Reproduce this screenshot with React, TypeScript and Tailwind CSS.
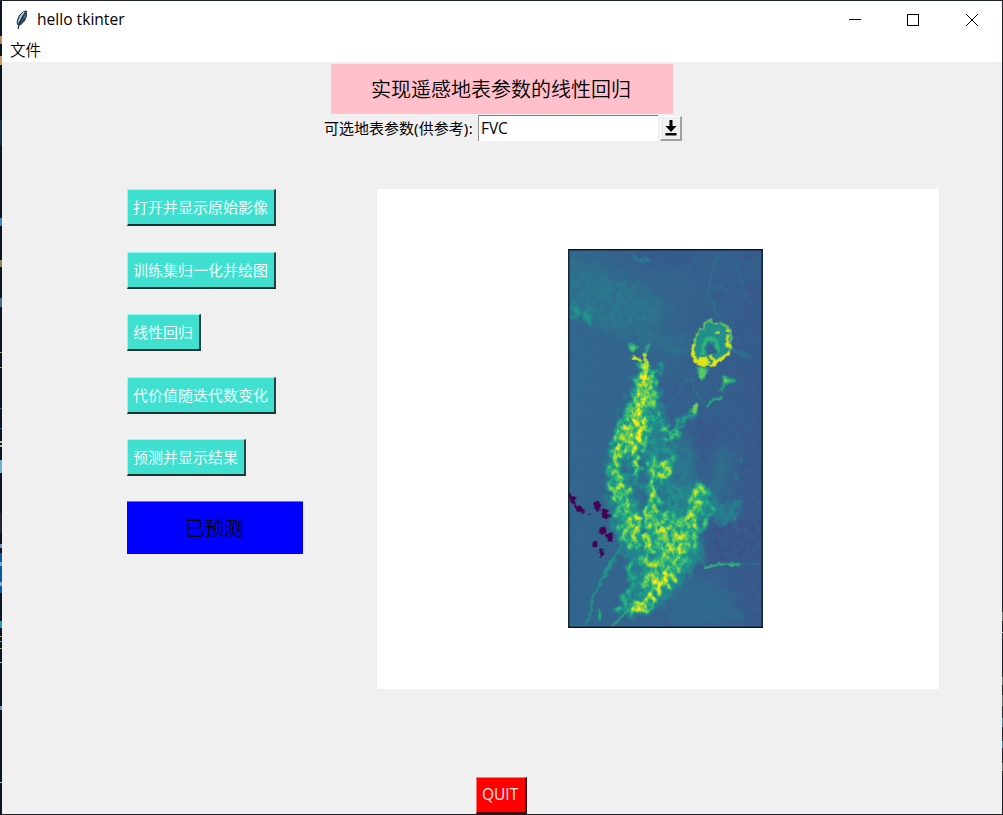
import type { ReactNode } from 'react';

const leftFlecks = [
  { top: 36, height: 8, color: '#b08b55' },
  { top: 56, height: 9, color: '#c39b63' },
  { top: 120, height: 25, color: '#16324f' },
  { top: 218, height: 8, color: '#3c86b8' },
  { top: 260, height: 7, color: '#92845c' },
  { top: 298, height: 9, color: '#416f9a' },
  { top: 352, height: 1, color: '#8aa84c' },
  { top: 367, height: 1, color: '#8aa84c' },
  { top: 408, height: 1, color: '#2b6699' },
  { top: 428, height: 1, color: '#2b6699' },
  { top: 441, height: 2, color: '#b8b8b8' },
  { top: 445, height: 2, color: '#b8b8b8' },
  { top: 460, height: 13, color: '#69afd4' },
  { top: 513, height: 20, color: '#25252d' },
  { top: 544, height: 4, color: '#6b94c4' },
  { top: 553, height: 40, color: '#075aa5' },
  { top: 562, height: 4, color: '#7aaac5' },
  { top: 582, height: 4, color: '#7aaac5' },
  { top: 621, height: 7, color: '#1b9db4' },
  { top: 636, height: 1, color: '#8aa84c' },
  { top: 641, height: 1, color: '#8aa84c' },
  { top: 648, height: 1, color: '#8aa84c' },
  { top: 662, height: 1, color: '#9fc6d6' },
  { top: 706, height: 4, color: '#6b94c4' },
  { top: 782, height: 1, color: '#9fc6d6' },
];

const rightFlecks = [
  { top: 612, height: 9, color: '#6d7074' },
  { top: 632, height: 1, color: '#a8abad' },
  { top: 677, height: 8, color: '#6d6c66' },
  { top: 695, height: 11, color: '#66695b' },
  { top: 718, height: 9, color: '#517b93' },
  { top: 741, height: 7, color: '#4f789a' },
  { top: 763, height: 8, color: '#6b6b60' },
];

function TkButton({ children, className }: { children: ReactNode; className: string }) {
  return (
    <button
      className={`flex h-[37px] shrink-0 items-center whitespace-nowrap border-t border-l border-r-2 border-b-2 border-t-[#8ffaf0] border-l-[#8ffaf0] border-r-[#1c4743] border-b-[#17332f] bg-[#40e0d0] pb-[2px] pl-[5px] text-[15px] leading-none font-normal text-[#eafefb] ${className}`}
    >
      {children}
    </button>
  );
}

function Feather() {
  return (
    <svg className="h-[20px] w-[14px]" viewBox="0 0 14 20">
      <path d="M11.2 .8C7 1.8 4 5 2.6 9.6c-.7 2.2-.4 4.2.2 5.2l1.4.2c2.4-1 4.8-2.9 6-5.4C11.700 6.400 12 3 11.200.8Z" fill="#3f70a3" stroke="#26303b" strokeWidth="1" />
      <path d="M9.500 2.300C6 4.800 4.500 8 3.800 12.500" fill="none" stroke="#b9d8ef" strokeWidth="1.600" />
      <path d="M10.300 2.500 4.500 12.500 3.200 19" fill="none" stroke="#20262d" strokeWidth="1.200" />
      <path d="M9.600 8 5.400 14.300" stroke="#39434e" strokeWidth="2" />
    </svg>
  );
}

function VegetationMap() {
  return (
    <svg className="block h-[379px] w-[195px]" viewBox="24 27 585 1137" preserveAspectRatio="none">
      <defs>
        <linearGradient id="ground" x1="0" y1="0.35" x2="1" y2="0.5">
          <stop offset="0" stopColor="#555" />
          <stop offset="0.5" stopColor="#515151" />
          <stop offset="1" stopColor="#464646" />
        </linearGradient>
        <filter id="viridis" filterUnits="userSpaceOnUse" x="0" y="0" width="640" height="1200" colorInterpolationFilters="sRGB">
          <feTurbulence type="fractalNoise" baseFrequency="0.04" numOctaves="4" seed="8" result="warp" />
          <feDisplacementMap in="SourceGraphic" in2="warp" scale="60" xChannelSelector="R" yChannelSelector="G" result="shape" />
          <feGaussianBlur in="shape" stdDeviation="2.6" result="soft" />
          <feTurbulence type="fractalNoise" baseFrequency="0.065 0.05" numOctaves="3" seed="21" />
          <feColorMatrix values="2.4 0 0 0 -0.7  2.4 0 0 0 -0.7  2.4 0 0 0 -0.7  0 0 0 0 1" result="grain" />
          <feComposite in="soft" in2="grain" operator="arithmetic" k1="0.9" k2="0.55" k3="-0.29" k4="0.145" />
          <feColorMatrix values="1 0 0 0 0  0 1 0 0 0  0 0 1 0 0  0 0 0 0 1" />
          <feComponentTransfer>
            <feFuncR type="table" tableValues="0.267 0.283 0.255 0.208 0.165 0.129 0.133 0.267 0.478 0.741 0.992" />
            <feFuncG type="table" tableValues="0.004 0.141 0.267 0.373 0.471 0.569 0.659 0.749 0.820 0.875 0.906" />
            <feFuncB type="table" tableValues="0.329 0.459 0.529 0.553 0.557 0.549 0.518 0.439 0.318 0.149 0.145" />
          </feComponentTransfer>
        </filter>
        <filter id="ragged" filterUnits="userSpaceOnUse" x="0" y="0" width="640" height="1200" colorInterpolationFilters="sRGB">
          <feTurbulence type="fractalNoise" baseFrequency="0.07" numOctaves="2" seed="3" />
          <feDisplacementMap in="SourceGraphic" scale="14" xChannelSelector="R" yChannelSelector="G" />
          <feGaussianBlur stdDeviation="1.9" />
        </filter>
        <filter id="haze" x="-30%" y="-30%" width="160%" height="160%" colorInterpolationFilters="sRGB">
          <feGaussianBlur stdDeviation="16" />
        </filter>
        <filter id="halo" x="-30%" y="-30%" width="160%" height="160%" colorInterpolationFilters="sRGB">
          <feGaussianBlur stdDeviation="7" />
        </filter>
      </defs>

      <g filter="url(#viridis)">
        <rect x="-60" y="-60" width="760" height="1320" fill="url(#ground)" />
        <g filter="url(#haze)">
          <path d="M20 60 190 110 330 200 300 240 250 290 130 270 20 210Z" fill="#616161" />
          <path d="M200 240 390 310 370 350 230 310Z" fill="#5d5d5d" />
          <path d="M130 20 440 20 420 70 230 80Z" fill="#494949" />
          <path d="M290 420 400 440 380 480 310 550 280 500Z" fill="#4c4c4c" />
          <path d="M300 600 390 590 420 740 330 800Z" fill="#636363" />
          <path d="M400 540 470 540 450 740 420 740Z" fill="#474747" />
          <path d="M450 650 520 610 510 760 450 790Z" fill="#5b5b5b" />
          <path d="M450 860 610 810 610 950 440 970Z" fill="#454545" />
          <path d="M330 1030 480 1020 570 1150 330 1160Z" fill="#575757" />
        </g>
        <g fill="#6a6a6a">
          <path d="M30 185 60 200 105 215 95 245 30 235Z" fill="#757575" />
          <path d="M205 35 265 60 255 72 220 60Z" />
          <path d="M215 440 290 410 315 520 320 600 345 650 330 740 400 740 450 740 470 800 430 870 430 960 340 1060 290 1110 180 1130 210 1000 150 850 140 640Z" fill="#747474" filter="url(#halo)" />
          <path d="M460 790 540 780 530 850 470 860Z" />
        </g>
        <g fill="#b0b0b0">
          <path d="M245 375 270 385 295 440 285 500 270 520 275 590 250 620 215 640 180 660 185 720 205 790 235 850 230 935 185 890 170 780 145 760 150 650 165 560 200 510 215 440Z" />
          <path d="M262 665 295 660 290 760 300 820 390 830 380 770 400 740 445 735 435 775 410 840 400 950 370 980 330 1040 240 1060 255 980 240 890 255 820 265 760Z" fill="#aaa" />
          <path d="M300 665 345 655 325 710 290 720Z" fill="#c0c0c0" />
          <path d="M280 1010 355 990 350 1030 285 1050Z" fill="#cfcfcf" />
        </g>
        <g fill="none" stroke="#d2d2d2" strokeLinecap="round">
          <path d="M250 380 262 450 235 510 230 620 220 700" strokeWidth="26" />
          <path d="M240 540 200 590" strokeWidth="30" />
          <path d="M175 610 170 690 195 760 230 850 238 920" strokeWidth="13" />
          <path d="M268 680 275 760 255 860 260 950 285 1030" strokeWidth="16" />
          <path d="M425 755 405 800 390 870 350 900 310 970" strokeWidth="19" stroke="#c4c4c4" />
          <path d="M300 860 330 920 370 940" strokeWidth="18" stroke="#c8c8c8" />
          <path d="M460 800 435 860 405 890" stroke="#a0a0a0" strokeWidth="15" />
          <path d="M210 960 215 1040 180 1110" stroke="#a0a0a0" strokeWidth="14" />
          <path d="M295 1050 265 1100 215 1105" strokeWidth="20" />
          <path d="M330 590 375 540 410 510" stroke="#999" strokeWidth="14" />
          <path d="M290 525 320 565 340 590 315 610" stroke="#a8a8a8" strokeWidth="15" />
          <path d="M305 370 300 400" stroke="#a0a0a0" strokeWidth="12" />
        </g>
        <g fill="none" stroke="#555" strokeWidth="13">
          <path d="M205 640 215 740 252 800 245 930" />
          <path d="M250 650 245 790" />
          <path d="M305 745 300 810M285 880 275 960M235 960 235 1050" strokeWidth="9" stroke="#666" />
        </g>
      </g>

      <g fill="none" filter="url(#ragged)">
        <g stroke="#277f8e" strokeWidth="4.5" opacity=".6">
          <path d="M475 45 455 100 443 160 460 185 462 210 478 230M443 150 480 137 505 155" />
          <path d="M410 50 385 100 378 140 330 130M525 60 545 110 540 130 580 90 600 50M545 130 560 190" opacity=".6" />
          <path d="M310 510 350 470 380 420 400 415 400 455 440 490M250 220 245 340" />
          <path d="M385 610 405 680 415 735" opacity=".5" />
          <path d="M540 650 545 665M530 700 530 720M500 840 535 820 540 780" strokeWidth="9" />
          <path d="M510 330 540 340 575 352" strokeWidth="13" />
          <path d="M30 1155 70 1160M470 975 600 970" />
        </g>
        <g stroke="#27a77f" strokeWidth="7">
          <path d="M190 910 150 970 115 1040 98 1070 90 1130 75 1155" stroke="#219a87" opacity=".8" />
          <path d="M165 950 130 1010" stroke="#219a87" strokeWidth="14" opacity=".6" />
          <path d="M255 340 268 310M483 455 500 420 515 428M440 502 460 480 490 470M355 550 330 590" />
          <path d="M435 983 480 972 540 974" stroke="#2fb47c" />
          <path d="M120 1110 117 1140M155 1160 220 1095" />
        </g>
        <path d="M205 312 235 320 222 332 210 330ZM490 408 524 422 490 434Z" fill="#64c865" stroke="#24a084" strokeWidth="6" />
        <path d="M215 350 245 363M255 340 260 385" stroke="#b6de2b" strokeWidth="9" />
        <path d="M408 492 401 520" stroke="#6ece58" strokeWidth="14" />
        <path d="M413 380 442 384 440 400 427 422 415 410Z" fill="#5ec962" stroke="#24a084" strokeWidth="5" />
      </g>

      <path d="M402 330 401 304 412 282 420 267 428 265 438 245 450 241 462 251 486 248 499 258 504 267 514 275 515 294 511 307 513 327 505 345 481 355 465 374 430 375 402 355Z" fill="#228f8d" stroke="#6ace5a" strokeWidth="5" filter="url(#ragged)" />
      <g fill="none" filter="url(#ragged)">
        <path d="M427 344 428 317 440 299 458 296 470 306 476 342" stroke="#30b57b" strokeWidth="9" />
        <path d="M437 341 438 320 450 309 465 320 468 342Z" fill="#31658e" />
        <path d="M405 312 398 330 398 345 411 365 427 374 439 361M451 345 463 368 483 357 499 348 509 332M504 285 501 315 511 320" stroke="#dde318" strokeWidth="10" />
        <path d="M466 278 478 275M498 274 508 273M447 378 467 370" stroke="#f3e51e" strokeWidth="8" />
        <circle cx="431" cy="366" r="15" fill="#e2e418" />
      </g>
      <g fill="#440154" stroke="#440154" strokeWidth="3" filter="url(#ragged)">
        <path d="M29 760 46 772 42 792 32 782ZM43 794 58 799 73 815 62 820 48 807ZM103 784 116 784 120 806 111 816 104 803ZM128 808 142 812 145 829 139 837 126 829ZM120 860 136 862 138 878 126 884 118 873ZM139 881 156 880 157 900 146 905ZM99 907 107 907 107 920 99 920ZM116 928 126 925 132 948 123 949Z" />
        <circle cx="151" cy="830" r="3" />
        <circle cx="91" cy="820" r="1" />
      </g>
      <rect x="26" y="29" width="581" height="1133" fill="none" stroke="#0a0f16" strokeWidth="4" />
    </svg>
  );
}

export default function App() {
  return (
    <div className="relative flex h-[815px] w-[1003px] flex-col border-t border-r border-b border-l-2 border-t-[#1d2129] border-r-[#202329] border-b-[#202124] border-l-[#0b1524] bg-[#f0f0f0] font-['Noto_Sans','Noto_Sans_CJK_SC',sans-serif] text-black">
      {leftFlecks.map((fleck) => (
        <div key={fleck.top} className="absolute -left-[2px] w-[2px]" style={{ top: fleck.top - 1, height: fleck.height, background: fleck.color }} />
      ))}
      {rightFlecks.map((fleck) => (
        <div key={fleck.top} className="absolute -right-px w-px" style={{ top: fleck.top - 1, height: fleck.height, background: fleck.color }} />
      ))}
      <header className="flex h-[38px] shrink-0 items-center bg-white">
        <div className="ml-[13px] flex items-center pb-px">
          <Feather />
          <span className="ml-[8px] font-['Open_Sans'] text-[15.6px] leading-none">hello tkinter</span>
        </div>
        <svg className="ml-auto h-[38px] w-[154px]" viewBox="848 1 154 38" fill="none" stroke="black" shapeRendering="crispEdges">
          <path d="M849 19.5h12" />
          <rect x="907.5" y="14.5" width="11" height="11" />
          <path d="m966 14 12 12m0-12-12 12" shapeRendering="auto" />
        </svg>
      </header>
      <nav className="flex h-[23px] shrink-0 items-center bg-white pb-px pl-[8px] font-['Noto_Sans_CJK_SC'] text-[15.5px] leading-none font-[350]">文件</nav>
      <main className="flex min-h-0 flex-1 flex-col">
        <h1 className="mt-[2px] ml-[329px] flex h-[50px] w-[342px] shrink-0 items-center justify-center bg-[#ffc0cb] pr-[2px] font-['Noto_Sans_CJK_SC'] text-[20px] leading-none font-[350]">实现遥感地表参数的线性回归</h1>
        <div className="ml-[322px] flex h-[28px] shrink-0 items-center text-[15px] leading-none">
          <label className="w-[154px] whitespace-nowrap">可选地表参数<span className="tracking-[0.3px]">(</span>供参考<span className="tracking-[0.3px]">):</span></label>
          <div className="flex h-[26px] w-[180px] items-center border-t border-l border-t-[#808080] border-l-[#909090] bg-white pl-[2px] font-['Open_Sans'] text-[15.500px] tracking-[-0.1px]">FVC</div>
          <button className="ml-[2px] flex h-[25px] w-[22px] items-center justify-center border-t border-r-2 border-b-2 border-l border-t-white border-r-[#a0a0a0] border-b-[#a0a0a0] border-l-white">
            <svg className="h-[17px] w-[14px]" viewBox="0 0 14 17">
              <path d="M5.500 1h3v6h4l-5.500 6-5.500-6h4ZM1.500 14h11v2.500H1.500Z" />
            </svg>
          </button>
        </div>
        <div className="mt-[47px] flex h-[500px] shrink-0 justify-between pr-[63px] pl-[125px]">
          <section className="flex flex-col items-start font-['Noto_Sans_CJK_SC']">
            <TkButton className="w-[149px]">打开并显示原始影像</TkButton>
            <TkButton className="mt-[26px] w-[149px]">训练集归一化并绘图</TkButton>
            <TkButton className="mt-[25px] w-[74px]">线性回归</TkButton>
            <TkButton className="mt-[26px] w-[149px]">代价值随迭代数变化</TkButton>
            <TkButton className="mt-[25px] w-[119px]">预测并显示结果</TkButton>
            <div className="mt-[25px] flex h-[53px] w-[176px] items-center justify-center border-t border-[#6a6aff] bg-[#0000ff] pr-[2px] text-[20px] leading-none font-[350] tracking-[-0.3px]">已预测</div>
          </section>
          <section className="flex h-[500px] w-[562px] justify-center bg-white pt-[60px] pl-[15px]">
            <VegetationMap />
          </section>
        </div>
        <button className="mt-auto ml-[474px] flex h-[37px] w-[51px] shrink-0 items-center border-t border-r-2 border-b-2 border-l border-t-[#ff7777] border-r-[#401010] border-b-[#500000] border-l-[#ff7777] bg-[#ff0000] pl-[5px] font-['Open_Sans'] text-[15.5px] leading-none font-normal text-[#ffecec]">QUIT</button>
      </main>
    </div>
  );
}
